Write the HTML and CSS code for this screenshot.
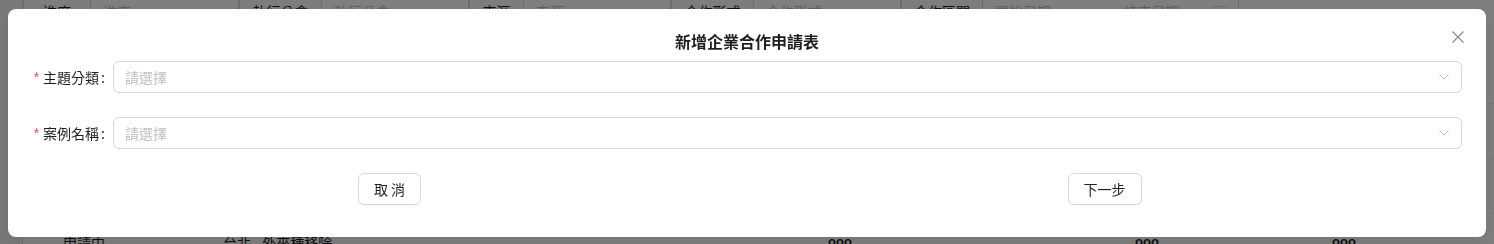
FILE: index.html
```html
<!DOCTYPE html>
<html lang="zh-Hant">
<head>
    <meta charset="UTF-8">
    <meta name="viewport" content="width=device-width, initial-scale=1.0">
    <title>新增企業合作申請表</title>
    <link rel="stylesheet" href="styles.css">
</head>
<body>
    <!-- page behind the dialog -->
    <div class="page">
        <div class="side"></div>
        <div class="main">
            <div class="filters">
                <div class="addon" style="width:67px">進度</div>
                <div class="field" style="width:149px">進度</div>
                <div class="addon" style="width:82px">執行公會</div>
                <div class="field" style="width:148px">執行公會</div>
                <div class="addon" style="width:54px">來源</div>
                <div class="field" style="width:148px">來源</div>
                <div class="addon" style="width:82px">合作形式</div>
                <div class="field" style="width:148px">合作形式</div>
                <div class="addon" style="width:81px">合作區間</div>
                <div class="field range" style="width:257px">
                    <span>開始日期</span>
                    <span>結束日期</span>
                    <span class="cal">▣</span>
                </div>
            </div>
            <div class="table">
                <div class="row"></div>
                <div class="row"></div>
                <div class="row">
                    <span class="cell" style="width:160px">申請中</span>
                    <span class="cell" style="width:605px">台北 - 外來種移除</span>
                    <span class="cell dots" style="width:307px">ooo</span>
                    <span class="cell dots" style="width:197px">ooo</span>
                    <span class="cell dots">ooo</span>
                </div>
            </div>
        </div>
    </div>

    <div class="mask">
        <div class="modal">
            <button class="close" type="button" aria-label="close">
                <svg width="12" height="12" viewBox="0 0 12 12">
                    <path d="M0.5 0.5 L11.5 11.5 M11.5 0.5 L0.5 11.5" stroke="#8c8c8c" stroke-width="1.2" fill="none"/>
                </svg>
            </button>
            <div class="modal-title">新增企業合作申請表</div>

            <form class="form">
                <div class="form-item">
                    <label class="form-label"><span class="req">*</span>主題分類<span class="colon">:</span></label>
                    <div class="select">
                        <span class="placeholder">請選擇</span>
                        <svg class="arrow" width="10" height="6" viewBox="0 0 10 6">
                            <path d="M0.5 0.5 L5 5.2 L9.5 0.5" stroke="#b8b8b8" stroke-width="1" fill="none"/>
                        </svg>
                    </div>
                </div>
                <div class="form-item">
                    <label class="form-label"><span class="req">*</span>案例名稱<span class="colon">:</span></label>
                    <div class="select">
                        <span class="placeholder">請選擇</span>
                        <svg class="arrow" width="10" height="6" viewBox="0 0 10 6">
                            <path d="M0.5 0.5 L5 5.2 L9.5 0.5" stroke="#b8b8b8" stroke-width="1" fill="none"/>
                        </svg>
                    </div>
                </div>

                <div class="footer">
                    <div class="footer-col"><button type="button" class="btn">取 消</button></div>
                    <div class="footer-col"><button type="button" class="btn">下一步</button></div>
                </div>
            </form>
        </div>
    </div>
</body>
</html>
```

FILE: styles.css
```css
body {
    margin: 0;
    padding: 0;
    background-color: #ffffff;
    color: #1f1f1f;
    font-family: "Noto Sans CJK TC", "Liberation Sans", sans-serif;
    font-size: 14px;
    overflow: hidden;
}

/* background page */

.page {
    display: flex;
    height: 244px;
}

.side {
    width: 22px;
    background-color: #f2f2f2;
    border-right: 1px solid #e0e0e0;
}

.main {
    flex: 1;
}

.filters {
    display: flex;
    margin-top: -5px;
    height: 32px;
}

.addon {
    box-sizing: border-box;
    height: 32px;
    line-height: 30px;
    text-align: center;
    background-color: #fafafa;
    border: 1px solid #d9d9d9;
    border-right: none;
}

.field {
    box-sizing: border-box;
    height: 32px;
    line-height: 30px;
    padding: 0 12px;
    color: #bfbfbf;
    background-color: #ffffff;
    border: 1px solid #d9d9d9;
    border-radius: 0 6px 6px 0;
}

.range {
    display: flex;
    justify-content: space-between;
}

.range span:nth-child(2) {
    margin-left: 40px;
}

.cal {
    color: #bfbfbf;
}

.table {
    margin-top: 76px;
}

.row {
    height: 54px;
    border-top: 1px solid #f0f0f0;
    display: flex;
    padding-left: 40px;
    align-items: flex-start;
}

.cell {
    display: inline-block;
    line-height: 22px;
    padding-top: 17px;
}

.dots {
    font-family: "Liberation Sans", sans-serif;
    font-weight: bold;
    font-size: 13px;
}

/* dialog */

.mask {
    position: fixed;
    top: 0;
    left: 0;
    right: 0;
    bottom: 0;
    background-color: rgba(0, 0, 0, 0.5);
    padding: 9px 8px 7px 8px;
    display: flex;
}

.modal {
    position: relative;
    flex: 1;
    background-color: #ffffff;
    border-radius: 8px;
    padding: 20px 24px 32px 24px;
    box-shadow: 0 6px 16px rgba(0, 0, 0, 0.08);
}

.modal-title {
    text-align: center;
    font-size: 16px;
    font-weight: 600;
    line-height: 24px;
    margin-bottom: 8px;
}

.close {
    position: absolute;
    top: 22px;
    right: 22px;
    width: 12px;
    height: 12px;
    padding: 0;
    border: none;
    background: none;
    cursor: pointer;
    display: flex;
}

.form-item {
    display: flex;
    align-items: center;
    margin-bottom: 24px;
}

.form-label {
    width: 81px;
    display: flex;
    justify-content: flex-end;
    align-items: center;
    line-height: 32px;
}

.req {
    color: #ff4d4f;
    font-family: "Liberation Sans", sans-serif;
    font-size: 14px;
    margin-right: 4px;
}

.colon {
    margin: 0 8px 0 2px;
}

.select {
    flex: 1;
    box-sizing: border-box;
    height: 32px;
    border: 1px solid #d9d9d9;
    border-radius: 6px;
    padding: 0 12px 0 11px;
    display: flex;
    align-items: center;
    justify-content: space-between;
}

.placeholder {
    color: #bfbfbf;
    line-height: 30px;
}

.footer {
    display: grid;
    grid-template-columns: 1fr 1fr;
}

.footer-col {
    display: flex;
    justify-content: center;
}

.btn {
    height: 32px;
    padding: 0 15px;
    font-family: inherit;
    font-size: 14px;
    color: #1f1f1f;
    background-color: #ffffff;
    border: 1px solid #d9d9d9;
    border-radius: 6px;
    box-shadow: 0 2px 0 rgba(0, 0, 0, 0.02);
    cursor: pointer;
}
```
